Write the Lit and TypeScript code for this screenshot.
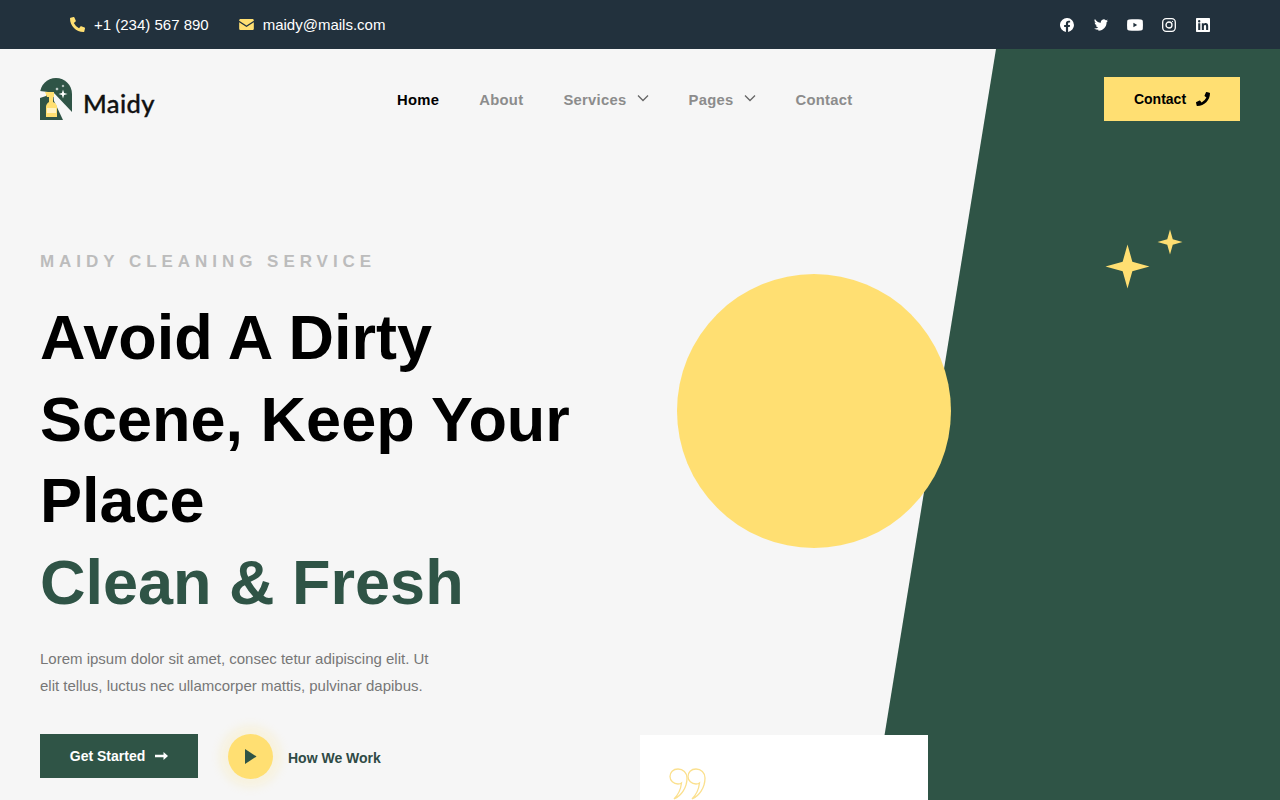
import { LitElement, html, css, svg } from "lit";
import { customElement } from "lit/decorators.js";

const starPath = (cx: number, cy: number, r: number, fill: string, f = 0.22) => {
  const k = r * f;
  return svg`<path fill="${fill}" d="M${cx} ${cy - r}L${cx + k} ${cy - k} ${cx + r} ${cy} ${cx + k} ${cy + k} ${cx} ${cy + r} ${cx - k} ${cy + k} ${cx - r} ${cy} ${cx - k} ${cy - k}Z"/>`;
};

const PHONE = "M497.39 361.8l-112-48a24 24 0 0 0-28 6.9l-49.6 60.6A370.66 370.66 0 0 1 130.6 204.11l60.6-49.6a23.94 23.94 0 0 0 6.9-28l-48-112A24.16 24.16 0 0 0 122.6.61l-104 24A24 24 0 0 0 0 48c0 256.5 207.9 464 464 464a24 24 0 0 0 23.4-18.6l24-104a24.29 24.29 0 0 0-14.01-27.6z";

@customElement("app-root")
export class AppRoot extends LitElement {
  static styles = css`
    :host { display: block; position: relative; width: 1280px; height: 800px; overflow: hidden; background: #f6f6f6; font-family: "Liberation Sans", Arial, sans-serif; }
    .panel { position: absolute; inset: 49px 0 0 0; background: #2f5446; clip-path: polygon(996px 0, 100% 0, 100% 100%, 874px 100%); }
    .circle { position: absolute; left: 677px; top: 274px; width: 274px; height: 274px; border-radius: 50%; background: #ffdf72; }
    .stars { position: absolute; left: 1100px; top: 225px; }
    .card { position: absolute; left: 640px; top: 735px; width: 288px; height: 120px; background: #fff; }
    .card svg { display: block; margin: 33px 0 0 29px; }

    .top { position: relative; height: 49px; background: #22313d; color: #fff; display: flex; align-items: center; justify-content: space-between; padding: 0 70px; font-size: 15px; }
    .contacts { display: flex; align-items: center; gap: 30px; }
    .contacts div { display: flex; align-items: center; gap: 9px; }
    .contacts svg { color: #ffdf72; display: block; }
    .social { display: flex; align-items: center; gap: 20px; }
    .social svg { display: block; }
    .social svg.yt { margin: 0 -1px; }

    .nav { position: relative; display: flex; align-items: flex-start; padding: 28px 40px 0; height: 72px; box-sizing: border-box; }
    .logo { display: flex; align-items: center; gap: 11px; width: 357px; height: 44px; color: #111; font-family: "Lato", sans-serif; font-size: 25.500px; font-weight: 500; letter-spacing: .4px; -webkit-text-stroke: .35px #111; }
    .logo span { position: relative; top: 4px; }
    .links { display: flex; align-items: center; height: 44px; padding-top: 2px; box-sizing: border-box; gap: 40px; font-size: 14.800px; font-weight: 700; color: #8c8c8c; letter-spacing: .28px; flex: 1; }
    .links a { display: flex; align-items: center; gap: 10px; }
    .links a svg { position: relative; top: -2px; }
    .links a.on { color: #000; }
    .cta { display: flex; align-items: center; justify-content: center; gap: 10px; width: 136px; height: 44px; background: #ffdf72; color: #000; font-size: 14px; font-weight: 700; }

    .hero { position: relative; padding: 0 40px; width: 600px; }
    .eyebrow { margin-top: 131px; font-size: 17px; line-height: 20px; font-weight: 700; letter-spacing: 4.960px; color: #bcbcbc; }
    h1 { margin: 25px 0 0; font-size: 63px; line-height: 81.500px; font-weight: 700; color: #000; }
    h1 span { display: block; color: #2f5446; }
    p { margin: 22px 0 0; font-size: 15px; line-height: 27px; color: #777; width: 400px; }
    .actions { display: flex; align-items: flex-start; margin-top: 35px; }
    .start { display: flex; align-items: center; justify-content: center; gap: 10px; width: 158px; height: 44px; background: #2f5446; color: #fff; font-size: 14px; font-weight: 700; }
    .play { display: flex; align-items: center; gap: 15px; margin-left: 30px; color: #2f4a45; font-size: 14px; font-weight: 700; }
    .disc { width: 45px; height: 45px; border-radius: 50%; background: #ffdf72; box-shadow: 0 0 8px 9px rgba(255,223,114,.16); display: flex; align-items: center; justify-content: center; }
    .disc svg { display: block; }
    .play b { position: relative; top: 1px; }
  `;

  chev() {
    return html`<svg width="12" height="8" viewBox="0 0 12 8"><path d="M1 1.500 6 6.500 11 1.500" fill="none" stroke="#666" stroke-width="1.300"/></svg>`;
  }

  render() {
    return html`
      <div class="panel"></div>
      <div class="circle"></div>
      <svg class="stars" width="90" height="70" viewBox="0 0 90 70">${starPath(27.5, 41.5, 22, "#ffdf72")}${starPath(70, 17, 12.5, "#ffdf72")}</svg>
      <div class="card">
        <svg width="38" height="32" viewBox="0 0 38 32" fill="none" stroke="#fbe08e" stroke-width="1.300">
          <path d="M9 1C4 1 1 4.500 1 8.500s3.500 7.500 8 7.500c1.500 0 2.800-.4 3.500-1C11.800 21 9 27 5 31 12 28 18 20 18 10 18 4.500 14 1 9 1Z"/>
          <path d="M27 1c-5 0-8 3.500-8 7.500s3.500 7.500 8 7.500c1.500 0 2.800-.4 3.500-1-.7 6-3.500 12-7.500 16 7-3 13-11 13-21C36 4.500 32 1 27 1Z"/>
        </svg>
      </div>

      <div class="top">
        <div class="contacts">
          <div>
            <svg viewBox="0 0 512 512" width="15" height="15"><path fill="currentColor" d="${PHONE}"/></svg>
            <span>+1 (234) 567 890</span>
          </div>
          <div>
            <svg viewBox="0 0 16 12" width="15" height="11"><path fill="currentColor" d="M1.500 0h13C15.300 0 16 .7 16 1.500v.4L8 7 0 1.900v-.4C0 .7.700 0 1.500 0ZM0 3.500 8 8.600l8-5.100v7c0 .8-.7 1.500-1.500 1.500h-13C.7 12 0 11.300 0 10.500Z"/></svg>
            <span>maidy@mails.com</span>
          </div>
        </div>
        <div class="social">
          <svg width="14" height="14" viewBox="0 0 16 16"><path fill="#fff" d="M16 8a8 8 0 1 0-9.250 7.900v-5.590H4.720V8h2.030V6.240c0-2 1.190-3.110 3.020-3.110.87 0 1.790.16 1.790.16v1.970h-1c-1 0-1.310.62-1.310 1.250V8h2.220l-.35 2.310H9.250v5.590A8 8 0 0 0 16 8Z"/></svg>
          <svg width="14" height="14" viewBox="0 0 16 16"><path fill="#fff" d="M5.030 14.500c6.040 0 9.340-5 9.340-9.340l-.01-.42A6.700 6.700 0 0 0 16 3.040a6.500 6.500 0 0 1-1.890.52 3.300 3.300 0 0 0 1.450-1.820 6.600 6.600 0 0 1-2.080.8 3.280 3.280 0 0 0-5.600 2.990A9.320 9.320 0 0 1 1.110 1.100a3.280 3.280 0 0 0 1.020 4.380A3.300 3.300 0 0 1 .64 5.070v.04a3.280 3.280 0 0 0 2.630 3.220 3.300 3.300 0 0 1-1.480.06 3.290 3.290 0 0 0 3.070 2.280A6.590 6.590 0 0 1 0 12.030a9.290 9.290 0 0 0 5.030 1.470Z"/></svg>
          <svg class="yt" width="16" height="14" viewBox="0 0 16 12"><path fill="#fff" fill-rule="evenodd" d="M2 .5C5.500.2 10.500.2 14 .5c1 .1 1.700.8 1.800 1.800.2 2.500.2 4.900 0 7.400-.1 1-.8 1.700-1.800 1.800-3.500.3-8.500.3-12 0-1-.1-1.700-.8-1.800-1.800C0 7.200 0 4.800.2 2.300.3 1.300 1 .6 2 .5ZM6.400 3.800v4.400L10.200 6Z"/></svg>
          <svg width="14" height="14" viewBox="0 0 14 14" fill="none" stroke="#fff" stroke-width="1.300"><rect x=".7" y=".7" width="12.600" height="12.600" rx="3.500"/><circle cx="7" cy="7" r="3"/><circle cx="10.500" cy="3.500" r=".6" fill="#fff" stroke="none"/></svg>
          <svg width="14" height="14" viewBox="0 0 14 14"><path fill="#fff" fill-rule="evenodd" d="M1 0h12c.6 0 1 .4 1 1v12c0 .6-.4 1-1 1H1c-.6 0-1-.4-1-1V1c0-.6.4-1 1-1Zm1.200 5.300V12h2.100V5.300Zm1-3.300a1.200 1.200 0 1 0 0 2.400 1.200 1.200 0 0 0 0-2.400Zm2.600 3.300V12h2.100V8.600c0-1 .4-1.600 1.200-1.600s1 .6 1 1.500V12h2.100V8.100c0-1.900-1-3-2.500-3-1 0-1.600.5-1.900 1V5.300Z"/></svg>
        </div>
      </div>

      <div class="nav">
        <div class="logo">
          <svg width="32" height="42" viewBox="0 0 32 42">
            <path fill="#2f5446" d="M0 42V16C0 7 7 0 16 0s16 7 16 16v26Z"/>
            <path fill="#f6f6f6" d="M13 14 32 34V42H23L14 23Z"/>
            <path fill="#f6f6f6" d="M0 13 8 14 6 18 0 20Z"/>
            <path fill="#ffdf72" d="M5 14h9v5h-1v5c3 1 4 3 4 5v10H6V29c0-2 1-4 3-5v-5H7Z"/>
            <rect x="7" y="30" width="9" height="5" fill="#fff3c4"/>
            ${starPath(23, 16, 4.5, "#fff", 0.24)}${starPath(17, 11, 1.8, "#fff", 0.3)}${starPath(23, 8, 1.5, "#fff", 0.3)}
          </svg>
          <span>Maidy</span>
        </div>
        <div class="links">
          <a class="on">Home</a>
          <a>About</a>
          <a>Services ${this.chev()}</a>
          <a>Pages ${this.chev()}</a>
          <a>Contact</a>
        </div>
        <div class="cta">
          <span>Contact</span>
          <svg width="14" height="14" viewBox="0 0 512 512"><path fill="#000" transform="matrix(-1 0 0 1 512 0)" d="${PHONE}"/></svg>
        </div>
      </div>

      <div class="hero">
        <div class="eyebrow">MAIDY CLEANING SERVICE</div>
        <h1>Avoid A Dirty Scene, Keep Your Place <span>Clean &amp; Fresh</span></h1>
        <p>Lorem ipsum dolor sit amet, consec tetur adipiscing elit. Ut elit tellus, luctus nec ullamcorper mattis, pulvinar dapibus.</p>
        <div class="actions">
          <div class="start">
            <span>Get Started</span>
            <svg width="13" height="10" viewBox="0 0 13 10"><path fill="#fff" d="M0 3.800h8.500V1L13 5 8.500 9V6.200H0Z"/></svg>
          </div>
          <div class="play">
            <div class="disc"><svg width="13" height="15" viewBox="0 0 13 15"><path fill="#2f5446" d="M1 0 12.500 7.500 1 15Z"/></svg></div>
            <b>How We Work</b>
          </div>
        </div>
      </div>
    `;
  }
}
